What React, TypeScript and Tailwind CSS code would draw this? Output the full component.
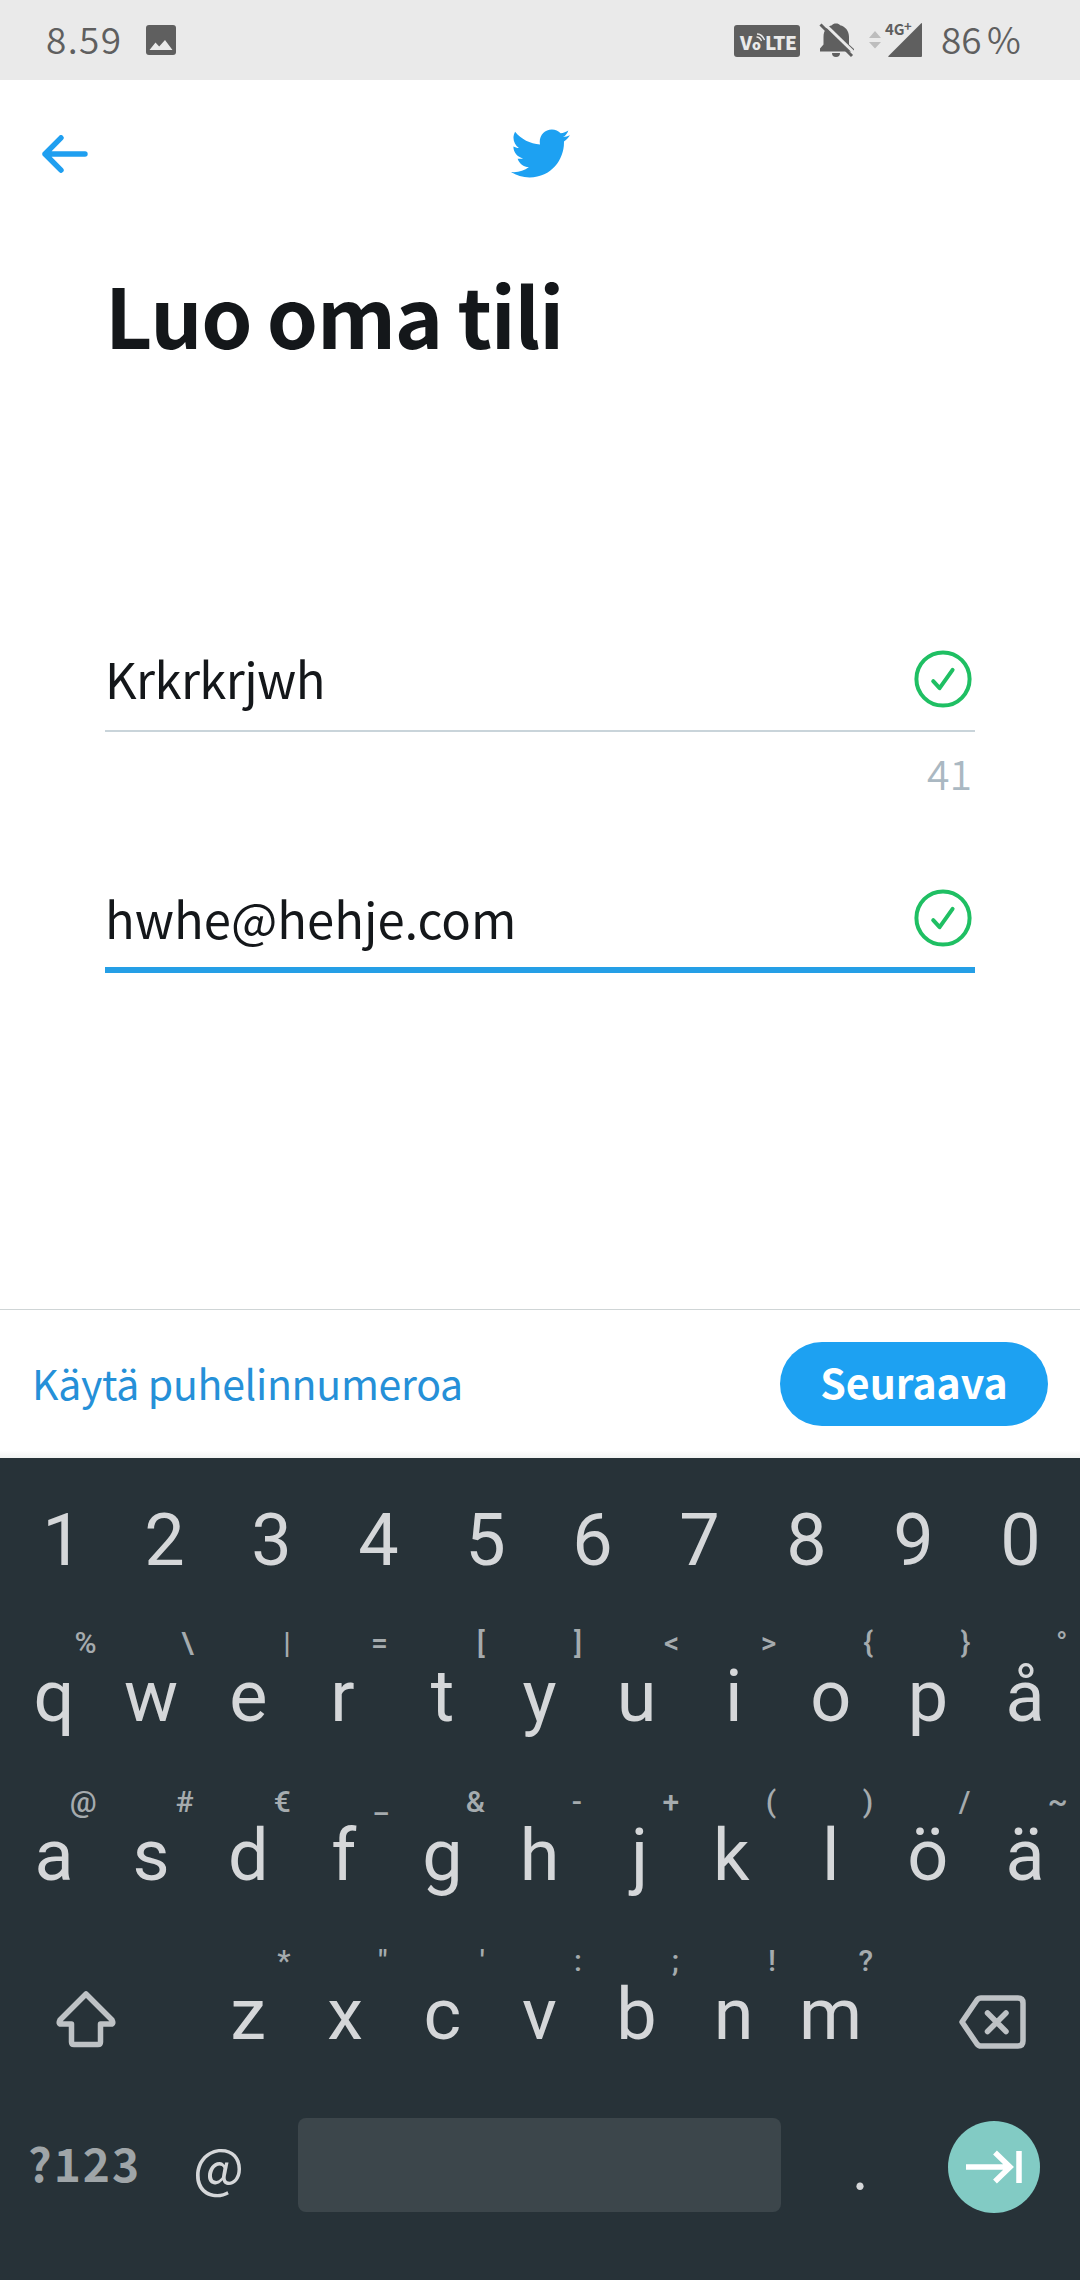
import React from "react";
import { FaTwitter } from "react-icons/fa";

const NUMBERS = ["1", "2", "3", "4", "5", "6", "7", "8", "9", "0"];

type KeyDef = [letter: string, hint: string];

const ROW_TOP: KeyDef[] = [
  ["q", "%"], ["w", "\\"], ["e", "|"], ["r", "="], ["t", "["], ["y", "]"],
  ["u", "<"], ["i", ">"], ["o", "{"], ["p", "}"], ["å", "°"],
];
const ROW_HOME: KeyDef[] = [
  ["a", "@"], ["s", "#"], ["d", "€"], ["f", "_"], ["g", "&"], ["h", "-"],
  ["j", "+"], ["k", "("], ["l", ")"], ["ö", "/"], ["ä", "~"],
];
const ROW_BOTTOM: KeyDef[] = [
  ["z", "*"], ["x", '"'], ["c", "'"], ["v", ":"], ["b", ";"], ["n", "!"], ["m", "?"],
];

// Optical corrections for letters whose ink is off centre in their advance width.
const NUDGE: Record<string, string> = {
  r: "pr-[6px]",
  k: "pr-[5px]",
  f: "pr-[3px]",
  j: "pl-[6px]",
};

function Key({ def }: { def: KeyDef }) {
  return (
    <button className={`relative flex h-[159px] w-[97.1px] items-center justify-center text-[72px] leading-none text-[#d5d7d9] ${NUDGE[def[0]] ?? ""}`}>
      {def[0]}
      <span className="absolute right-[6px] top-[11px] text-[30px] font-medium leading-[30px] text-[#a5abae]">{def[1]}</span>
    </button>
  );
}

function KeyRow({ keys }: { keys: KeyDef[] }) {
  return (
    <div className="flex h-[159px] pl-[5.500px]">
      {keys.map((k) => (
        <Key key={k[0]} def={k} />
      ))}
    </div>
  );
}

function CheckCircle() {
  return (
    <svg width="58" height="58" viewBox="0 0 58 58" fill="none" stroke="#1fbf63" className="mb-[2px] shrink-0">
      <circle cx="29" cy="29" r="26.6" strokeWidth="4" />
      <path d="M19.2 31.2 L25.6 38.2 L38.6 19.8" strokeWidth="4" strokeLinecap="round" strokeLinejoin="round" />
    </svg>
  );
}

function StatusBar() {
  return (
    <header className="flex h-20 items-center bg-[#eaeaea] pl-[46px] text-[37px] font-[350] text-[#5f5f5f]">
      <span className="w-[76px] whitespace-nowrap pb-[3px] leading-[77px] tracking-[1.4px]">8.59</span>
      <svg width="30" height="30" viewBox="0 0 30 30" className="ml-[24px]">
        <rect width="30" height="30" rx="3" fill="#5f5f5f" />
        <path d="M3.5 25 L9.500 17.5 L13.2 21.5 L19 15 L26.5 25 Z" fill="#eaeaea" />
      </svg>
      <div className="ml-auto flex h-20 items-center">
        <div className="relative mt-[2px] flex h-[32px] w-[66px] items-center rounded-[3px] bg-[#5f5f5f] pl-[6px] text-[19px] font-black leading-none text-[#eaeaea]">
          <span className="w-[12px]">V</span>
          <span className="w-[13px] pt-[6px] text-[14px]">o</span>
          <span className="tracking-[-0.5px]">LTE</span>
          <svg width="10" height="9" viewBox="0 0 10 9" className="absolute left-[22px] top-[8px]" fill="none" stroke="#eaeaea" strokeWidth="1.4">
            <path d="M1 1 Q6 1 8.5 7 M0.5 4 Q4 4 5.5 8" />
          </svg>
        </div>
        <svg width="36" height="36" viewBox="0 0 36 36" className="ml-[19px]">
          <path d="M1 29.5 V26.5 L4.5 22.5 V15 C4.5 8 8.5 4 13 3.2 C14 1 20 1 21 3.2 C26.500 4.300 30 9 30 15 V22.500 L35 27 V29.500 Z" fill="#5f5f5f" />
          <path d="M13 31 h8 a4 4 0 0 1 -8 0 Z" fill="#5f5f5f" />
          <path d="M3.500 0 L36 31.500" stroke="#eaeaea" strokeWidth="3" />
          <path d="M1.500 2.500 L33 34" stroke="#5f5f5f" strokeWidth="3" />
        </svg>
        <svg width="12" height="18" viewBox="0 0 12 18" className="ml-[14px]" fill="#bdbdbd">
          <path d="M0 7 L6 0 L12 7 Z M0 11 H12 L6 17.500 Z" />
        </svg>
        <div className="relative ml-[6px] h-[36px] w-[36px]">
          <svg width="36" height="36" viewBox="0 0 36 36" fill="#5f5f5f">
            <path d="M34 1.500 Q35 0.500 35 2 V34 Q35 35 34 35 H2 Q0.500 35 1.500 34 Z" />
          </svg>
          <span className="absolute left-[-2px] top-[-1px] text-[15px] font-bold leading-[15px]">4G</span>
          <span className="absolute left-[17px] top-[-4px] text-[13px] font-bold leading-[15px]">+</span>
        </div>
        <span className="ml-[18px] w-[139px] whitespace-nowrap pb-[3px] leading-[77px] [word-spacing:-3px]">86 %</span>
      </div>
    </header>
  );
}

export default function App() {
  return (
    <div className="flex h-[2280px] w-[1080px] flex-col overflow-hidden bg-white font-['Noto_Sans_CJK_SC',sans-serif] text-[#14171a]">
      <StatusBar />

      <nav className="grid h-[147px] grid-cols-3 items-center px-[42px]">
        <svg width="46" height="38" viewBox="0 0 46 38" fill="none" stroke="#1f9ff0" strokeWidth="5.400" strokeLinecap="round" strokeLinejoin="round">
          <path d="M19 2.800 L3 19 L19 35.200 M3 19 H43" />
        </svg>
        <FaTwitter size={59} color="#1da1f2" className="justify-self-center" />
      </nav>

      <main className="flex h-[1082px] flex-col px-[105px]">
        <h1 className="mt-[27px] h-[121px] whitespace-nowrap text-[82px] font-bold leading-[120px] tracking-[-1.2px] [word-spacing:-2px]">Luo oma tili</h1>

        <div className="mt-[255px] flex h-[102px] items-center justify-between border-b-[2px] border-[#c9d4da] pr-[3px]">
          <span className="pb-[4px] text-[49px] leading-[68px] tracking-[-0.6px]">Krkrkrjwh</span>
          <CheckCircle />
        </div>
        <div className="h-[86px] pr-[3px] pt-[7px] text-right text-[41px] font-[350] leading-[66px] text-[#aab8c2]">41</div>

        <div className="mt-[53px] flex h-[102px] items-center justify-between border-b-[6px] border-[#259fe6] pr-[3px]">
          <span className="pb-[2px] text-[49px] leading-[68px]">hwhe@hehje.com</span>
          <CheckCircle />
        </div>
      </main>

      <footer className="flex h-[149px] items-center justify-between border-t border-[#cfd5d6] bg-gradient-to-b from-white from-95% to-[#f1f3f2] pl-[32px] pr-[32px]">
        <a className="whitespace-nowrap pb-[4px] text-[41px] leading-[60px] tracking-[-0.3px] text-[#2590d8]">Käytä puhelinnumeroa</a>
        <button className="flex h-[84px] w-[268px] items-center justify-center rounded-full bg-[#1da1f2] pb-[5px] text-[41px] font-bold leading-none text-white">Seuraava</button>
      </footer>

      <section className="flex h-[822px] flex-col bg-[#273238] font-['Roboto',sans-serif]">
        <div className="flex h-[159px] pl-[4px] pt-[6px]">
          {NUMBERS.map((n) => (
            <button key={n} className="flex w-[107px] items-center justify-center text-[72px] leading-none text-[#d5d7d9] first:pl-[10px]">{n}</button>
          ))}
        </div>
        <KeyRow keys={ROW_TOP} />
        <KeyRow keys={ROW_HOME} />

        <div className="flex h-[159px] items-center">
          <div className="flex w-[199.500px] pl-[56px] pt-[8px]">
            <svg width="60" height="60" viewBox="0 0 60 60" fill="none" stroke="#bec2c5" strokeWidth="5.500" strokeLinejoin="round">
              <path d="M30 5 L4 31 Q2 35 5 35 H15.500 V53 Q15.500 55.500 18 55.500 H42 Q44.500 55.500 44.500 53 V35 H55 Q58 35 56 31 Z" />
            </svg>
          </div>
          {ROW_BOTTOM.map((k) => (
            <Key key={k[0]} def={k} />
          ))}
          <svg width="68" height="54" viewBox="0 0 68 54" fill="none" stroke="#bec2c5" strokeWidth="5.500" strokeLinejoin="round" strokeLinecap="round" className="ml-[79.500px] mt-[15px]">
            <path d="M3 27 L18 5 Q19.500 3 22 3 H59 Q64 3 64 8 V46 Q64 51 59 51 H22 Q19.500 51 18 49 Z" />
            <path d="M28.500 18 L47 36.500 M47 18 L28.500 36.500" />
          </svg>
        </div>

        <div className="flex h-[142px] items-center font-['Noto_Sans_CJK_SC',sans-serif]">
          <span className="w-[165px] pb-[6px] pl-[28px] text-[46px] font-bold leading-[74px] tracking-[2px] text-[#9fa5a8]">?123</span>
          <span className="w-[133px] pl-[28px] text-[54px] leading-[80px] text-[#d5d7d9]">@</span>
          <button aria-label="space" className="h-[94px] w-[483px] rounded-[8px] bg-[#3c464b]" />
          <span className="flex w-[167px] justify-center pr-[9px] pt-[2px] text-[54px] leading-[80px] text-[#d5d7d9]">.</span>
          <button className="mt-[4px] flex h-[92px] w-[92px] items-center justify-center rounded-full bg-[#82cbc4]">
            <svg width="56" height="34" viewBox="0 0 56 34" fill="none" stroke="#ffffff" strokeWidth="5.500">
              <path d="M0 17 H44 M29 2.500 L44 17 L29 31.500 M53 1 V33" />
            </svg>
          </button>
        </div>
      </section>
    </div>
  );
}
